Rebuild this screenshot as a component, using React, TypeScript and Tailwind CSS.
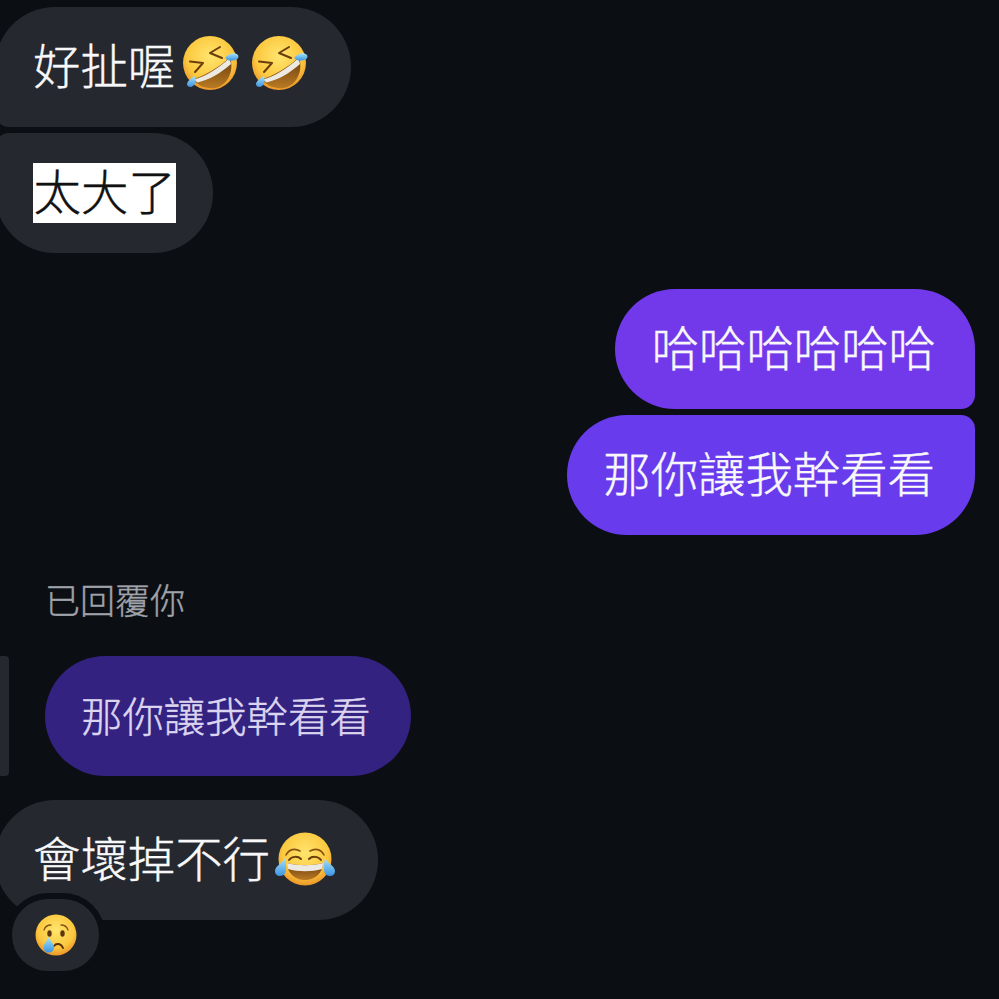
import React from "react";

const font = { fontFamily: '"Noto Sans CJK TC", "Noto Sans", sans-serif' };

function Defs({ id }: { id: string }) {
  return (
    <defs>
      <radialGradient id={`${id}f`} cx="0.5" cy="0.38" r="0.66">
        <stop offset="0" stopColor="#ffe56e" />
        <stop offset="0.65" stopColor="#fcc83f" />
        <stop offset="1" stopColor="#e98c24" />
      </radialGradient>
      <linearGradient id={`${id}t`} x1="0" y1="0" x2="0" y2="1">
        <stop offset="0" stopColor="#a6e3f8" />
        <stop offset="1" stopColor="#3b94e2" />
      </linearGradient>
      <linearGradient id={`${id}m`} x1="0" y1="0" x2="0" y2="1">
        <stop offset="0" stopColor="#6a3a0d" />
        <stop offset="1" stopColor="#b87a24" />
      </linearGradient>
    </defs>
  );
}

function Rofl({ id }: { id: string }) {
  return (
    <svg viewBox="0 0 70 70" className="w-[70px] h-[70px] shrink-0 -mt-[4px]">
      <Defs id={id} />
      <circle cx="35" cy="33" r="27" fill={`url(#${id}f)`} />
      <path d="M17 49 C28 47 45 37 55 27 C60 43 51 56 40 58 C31 59 23 56 17 49Z" fill={`url(#${id}m)`} />
      <path d="M19 49.5 C30 47 44 38 54.5 28 L56 34 C46 43 34 50 22.5 52.5Z" fill="#ece8e2" />
      <path d="M15 31.5 L28 33 L20 42" fill="none" stroke="#6b3d0c" strokeWidth="2" strokeLinejoin="round" strokeLinecap="round" />
      <path d="M45 17 L35 23 L47 28" fill="none" stroke="#6b3d0c" strokeWidth="2" strokeLinejoin="round" strokeLinecap="round" />
      <path d="M50 28 C54 23 60 22 63 25 C64.5 28 62 30 58 30.5 C55 31 52 30 50 28Z" fill={`url(#${id}t)`} />
      <path d="M20 46 C16 48 12 52 12 54 C12 57 16 58 18 56 C21 54 21 50 20 46Z" fill={`url(#${id}t)`} />
    </svg>
  );
}

function Joy({ id }: { id: string }) {
  return (
    <svg viewBox="0 0 70 70" className="w-[70px] h-[70px] shrink-0">
      <Defs id={id} />
      <circle cx="35" cy="34" r="26.5" fill={`url(#${id}f)`} />
      <path d="M16 30 C19 24 25 23 30 26 M54 30 C51 24 45 23 40 26" fill="none" stroke="#8a5212" strokeWidth="1.6" strokeLinecap="round" />
      <path d="M19 35 C22 31 28 31 31 34 M51 35 C48 31 42 31 39 34" fill="none" stroke="#6b3d0c" strokeWidth="2" strokeLinecap="round" />
      <path d="M17 38 C28 41 42 41 53 38 C53 48 45 55 35 55 C25 55 17 48 17 38Z" fill={`url(#${id}m)`} />
      <path d="M17 38 C28 41 42 41 53 38 C53 41 52.5 43 52 44 C42 47 28 47 18 44 C17.5 43 17 41 17 38Z" fill="#ece8e2" />
      <path d="M15 33 C13 38 5 41 5 46 C5 50 8 51 10 51 C14 51 16 48 16 44 C16 40 16 37 15 33Z" fill={`url(#${id}t)`} />
      <path d="M55 33 C57 38 65 41 65 46 C65 50 62 51 60 51 C56 51 54 48 54 44 C54 40 54 37 55 33Z" fill={`url(#${id}t)`} />
    </svg>
  );
}

function Sad({ id }: { id: string }) {
  return (
    <svg viewBox="0 0 60 60" className="w-[60px] h-[60px]">
      <Defs id={id} />
      <circle cx="30" cy="30" r="20.5" fill={`url(#${id}f)`} />
      <path d="M18 25 C19 22 22 20 25 20 M35 20 C38 20 41 22 42 25" fill="none" stroke="#8a5212" strokeWidth="1.3" strokeLinecap="round" />
      <ellipse cx="23.5" cy="28.5" rx="2.2" ry="3.3" fill="#5f370c" />
      <ellipse cx="36.5" cy="28.5" rx="2.2" ry="3.3" fill="#5f370c" />
      <path d="M28 41 C30 38 35 38 37 43" fill="none" stroke="#5b3208" strokeWidth="1.9" strokeLinecap="round" />
      <path d="M22.7 32 C21 36 17.5 39 17.5 42.5 C17.5 46 20 47.5 22.7 47.5 C25.5 47.5 28 46 28 42.5 C28 39 24.5 36 22.7 32Z" fill={`url(#${id}t)`} />
    </svg>
  );
}

function Emoji({ children, w }: { children: React.ReactNode; w: string }) {
  return <span className={`inline-flex h-[60px] items-center justify-center ${w}`}>{children}</span>;
}

export default function App() {
  return (
    <div className="w-[999px] h-[999px] overflow-hidden bg-[#0b0e13] flex flex-col pt-[7px] text-[#f8f8fa] font-light [-webkit-text-stroke:0.4px_currentColor]" style={font}>
      <div className="self-start -ml-[5px] h-[120px] px-[38px] flex items-center rounded-[60px] rounded-bl-[14px] bg-[#25282e] text-[47.4px] leading-[60px]">
        <span className="-mt-[6px]">好扯喔</span>
        <Emoji w="w-[69px]"><Rofl id="a" /></Emoji>
        <Emoji w="w-[69px]"><Rofl id="b" /></Emoji>
      </div>
      <div className="self-start -ml-[5px] mt-[6px] h-[120px] pl-[38px] pr-[37px] flex items-center rounded-[60px] rounded-tl-[14px] bg-[#25282e] text-[47.4px]">
        <span className="bg-white text-[#111111] h-[60px] px-[0.5px] leading-[54px]">太大了</span>
      </div>

      <div className="self-end mr-[24px] mt-[36px] h-[120px] pb-[6px] pl-[37px] pr-[39px] flex items-center rounded-[60px] rounded-br-[14px] bg-[#7239eb] text-[47.4px] leading-[60px]">
        哈哈哈哈哈哈
      </div>
      <div className="self-end mr-[24px] mt-[6px] h-[120px] pb-[6px] pl-[36px] pr-[40px] flex items-center rounded-[60px] rounded-tr-[14px] bg-[#683bed] text-[47.4px] leading-[60px]">
        那你讓我幹看看
      </div>

      <div className="ml-[45px] mt-[40px] h-[48px] text-[35px] leading-[48px] text-[#a0a3a9]">已回覆你</div>

      <div className="mt-[33px] flex gap-[36px] items-stretch">
        <div className="w-[9px] rounded-r-[4px] bg-[#25282e]" />
        <div className="h-[120px] pb-[4px] pl-[36px] pr-[40px] flex items-center rounded-[60px] bg-[#33227f] text-[41.4px] leading-[60px] text-[#dcd5f0]">
          那你讓我幹看看
        </div>
      </div>

      <div className="relative self-start -ml-[5px] mt-[24px] h-[120px] px-[38px] flex items-center rounded-[60px] bg-[#25282e] text-[47.4px] leading-[60px]">
        <span className="-mt-[6px]">會壞掉不行</span>
        <Emoji w="w-[70px]"><Joy id="c" /></Emoji>
        <div className="absolute left-[11px] top-[93px] w-[99px] h-[84px] rounded-[42px] border-[6px] border-[#0b0e13] bg-[#25282e] flex items-center justify-center">
          <Sad id="d" />
        </div>
      </div>
    </div>
  );
}
